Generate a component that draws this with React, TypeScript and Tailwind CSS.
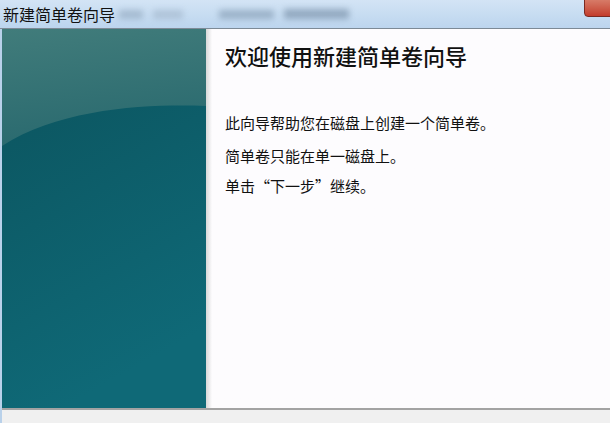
import React from 'react';

const font = { fontFamily: '"Noto Sans CJK SC", "Noto Sans", sans-serif' };

function SidePanel() {
  // the wizard's teal banner with its lighter top sweep
  return (
    <div className="w-[204px] h-full bg-[#0e5f6a]">
      <svg width="204" height="379" viewBox="0 0 204 379" className="block">
        <defs>
          <linearGradient id="lower" x1="0" y1="0" x2="0.3" y2="1">
            <stop offset="0" stopColor="#0b525c" />
            <stop offset="1" stopColor="#0f6977" />
          </linearGradient>
          <linearGradient id="upper" x1="0" y1="0" x2="0.2" y2="1">
            <stop offset="0" stopColor="#417c7b" />
            <stop offset="1" stopColor="#2a6a6f" />
          </linearGradient>
        </defs>
        <rect width="204" height="379" fill="url(#lower)" />
        <path d="M0,0 H204 V77 C150,75 60,78 0,117 Z" fill="url(#upper)" />
      </svg>
    </div>
  );
}

export default function App() {
  return (
    <div className="w-[610px] h-[423px] flex flex-col overflow-hidden bg-[#b9d1ea]" style={font}>
      <div className="relative h-[29px] shrink-0 bg-gradient-to-b from-[#d3e4f5] to-[#bcd5ee] border-b border-[#7d8a96] flex items-center">
        <span className="pl-[3px] pb-[1px] text-[16px] leading-none text-[#111] z-10">新建简单卷向导</span>
        <div className="flex items-center gap-[10px] ml-[4px] blur-[3px] opacity-60">
          <div className="w-[24px] h-[9px] bg-[#8ea4bb]" />
          <div className="w-[30px] h-[9px] bg-[#9fb3c8]" />
          <div className="w-[55px] h-[9px] ml-[26px] bg-[#7d95ad]" />
          <div className="w-[65px] h-[10px] bg-[#6f87a0]" />
        </div>
        <div className="absolute right-[-4px] top-[-3px] w-[30px] h-[20px] rounded-b-[4px] border border-[#7a2a22] bg-gradient-to-b from-[#d9826f] to-[#c23b2b]" />
      </div>
      <div className="flex flex-1 min-h-0 pl-[2px]">
        <SidePanel />
        <div className="flex-1 bg-gradient-to-r from-[#d8d8d8] via-[#fdfcfe] via-[1.5%] to-[#fdfcfe] pl-[19px] pt-[11px] text-[#111]">
          <div className="text-[22px] leading-[30px] font-medium">欢迎使用新建简单卷向导</div>
          <div className="mt-[43px] text-[15px] leading-[20px]">此向导帮助您在磁盘上创建一个简单卷。</div>
          <div className="mt-[13px] text-[15px] leading-[20px]">简单卷只能在单一磁盘上。</div>
          <div className="mt-[10px] text-[15px] leading-[20px]">单击“下一步”继续。</div>
        </div>
      </div>
      <div className="h-[15px] shrink-0 ml-[2px] border-t-2 border-[#a3a3a3] bg-[#f0f0f0]" />
    </div>
  );
}
